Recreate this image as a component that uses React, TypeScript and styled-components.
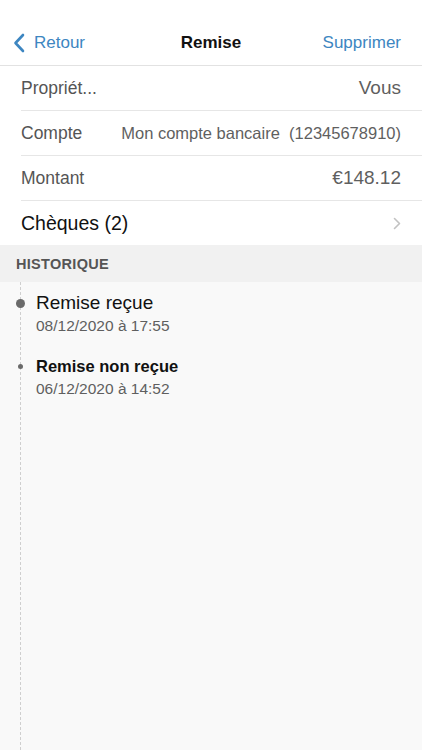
import React from 'react';
import styled, { createGlobalStyle } from 'styled-components';

const GlobalStyle = createGlobalStyle`
  html, body {
    margin: 0;
    padding: 0;
    background: #f9f9f9;
    font-family: "Liberation Sans", Arial, sans-serif;
    -webkit-font-smoothing: antialiased;
  }
  #root {
    min-height: 100vh;
    display: flex;
    flex-direction: column;
  }
`;

const blue = '#3d86c1';

const Page = styled.div`
  flex: 1;
  display: flex;
  flex-direction: column;
`;

const NavBar = styled.header`
  background: #fff;
  padding-top: 20px;
  height: 45px;
  display: grid;
  grid-template-columns: 1fr auto 1fr;
  align-items: center;
  border-bottom: 1px solid #e2e2e2;
`;

const BackButton = styled.button`
  justify-self: start;
  display: flex;
  align-items: center;
  gap: 9px;
  background: none;
  border: 0;
  padding: 0 0 0 13px;
  font: inherit;
  font-size: 17px;
  color: ${blue};
`;

const NavTitle = styled.h1`
  margin: 0;
  font-size: 17px;
  font-weight: 700;
  color: #111;
`;

const NavAction = styled.button`
  justify-self: end;
  background: none;
  border: 0;
  padding: 0 21px 0 0;
  font: inherit;
  font-size: 17px;
  color: ${blue};
`;

const Details = styled.section`
  background: #fff;
  padding-left: 21px;
`;

const Row = styled.div<{ $last?: boolean }>`
  height: 44px;
  display: flex;
  align-items: center;
  justify-content: space-between;
  gap: 12px;
  padding-right: 21px;
  border-bottom: ${p => (p.$last ? 'none' : '1px solid #e6e6e6')};
`;

const Label = styled.span<{ $strong?: boolean }>`
  font-size: ${p => (p.$strong ? 19.5 : 17.5)}px;
  color: ${p => (p.$strong ? '#111' : '#555')};
  white-space: nowrap;
`;

const Value = styled.span<{ $small?: boolean }>`
  font-size: ${p => (p.$small ? 16.5 : 19)}px;
  color: #5f5f5f;
  white-space: pre;
`;

const SectionHeader = styled.div`
  height: 37px;
  display: flex;
  align-items: center;
  padding-left: 16px;
  background: #f1f1f1;
  font-size: 14.5px;
  font-weight: 700;
  letter-spacing: 0.3px;
  color: #555;
`;

const Timeline = styled.div`
  flex: 1;
  margin-left: 20px;
  border-left: 1px dashed #cfcfcf;
  padding: 10px 0 0 15px;
  display: flex;
  flex-direction: column;
  gap: 20px;
`;

const Event = styled.div`
  position: relative;
  display: flex;
  flex-direction: column;
  gap: 2px;
`;

const Dot = styled.span<{ $size: number }>`
  position: absolute;
  left: ${p => -15.5 - p.$size / 2}px;
  top: ${p => 11 - p.$size / 2}px;
  width: ${p => p.$size}px;
  height: ${p => p.$size}px;
  border-radius: 50%;
  background: #6a6a6a;
`;

const EventTitle = styled.div<{ $bold?: boolean }>`
  font-size: ${p => (p.$bold ? 16.5 : 19)}px;
  line-height: 22px;
  font-weight: ${p => (p.$bold ? 700 : 400)};
  color: #111;
`;

const EventDate = styled.div`
  font-size: 15.5px;
  line-height: 19px;
  color: #5f5f5f;
`;

const BackChevron = () => (
  <svg width="12" height="20" viewBox="0 0 12 20" fill="none">
    <path d="M10 2 L2.5 10 L10 18" stroke={blue} strokeWidth="2.6" strokeLinecap="round" strokeLinejoin="round" />
  </svg>
);

const RowChevron = () => (
  <svg width="8" height="13" viewBox="0 0 8 13" fill="none">
    <path d="M1.5 1.5 L6.5 6.5 L1.5 11.5" stroke="#c2c2c2" strokeWidth="1.6" strokeLinecap="round" strokeLinejoin="round" />
  </svg>
);

const history = [
  { title: 'Remise reçue', date: '08/12/2020 à 17:55', current: true },
  { title: 'Remise non reçue', date: '06/12/2020 à 14:52', current: false },
];

const App = () => {
  return (
    <Page>
      <GlobalStyle />
      <NavBar>
        <BackButton>
          <BackChevron />
          Retour
        </BackButton>
        <NavTitle>Remise</NavTitle>
        <NavAction>Supprimer</NavAction>
      </NavBar>

      <Details>
        <Row>
          <Label>Propriét...</Label>
          <Value>Vous</Value>
        </Row>
        <Row>
          <Label>Compte</Label>
          <Value $small>{'Mon compte bancaire  (12345678910)'}</Value>
        </Row>
        <Row>
          <Label>Montant</Label>
          <Value>€148.12</Value>
        </Row>
        <Row $last>
          <Label $strong>Chèques (2)</Label>
          <RowChevron />
        </Row>
      </Details>

      <SectionHeader>HISTORIQUE</SectionHeader>

      <Timeline>
        {history.map(item => (
          <Event key={item.date}>
            <Dot $size={item.current ? 9 : 5} />
            <EventTitle $bold={!item.current}>{item.title}</EventTitle>
            <EventDate>{item.date}</EventDate>
          </Event>
        ))}
      </Timeline>
    </Page>
  );
};

export default App;
